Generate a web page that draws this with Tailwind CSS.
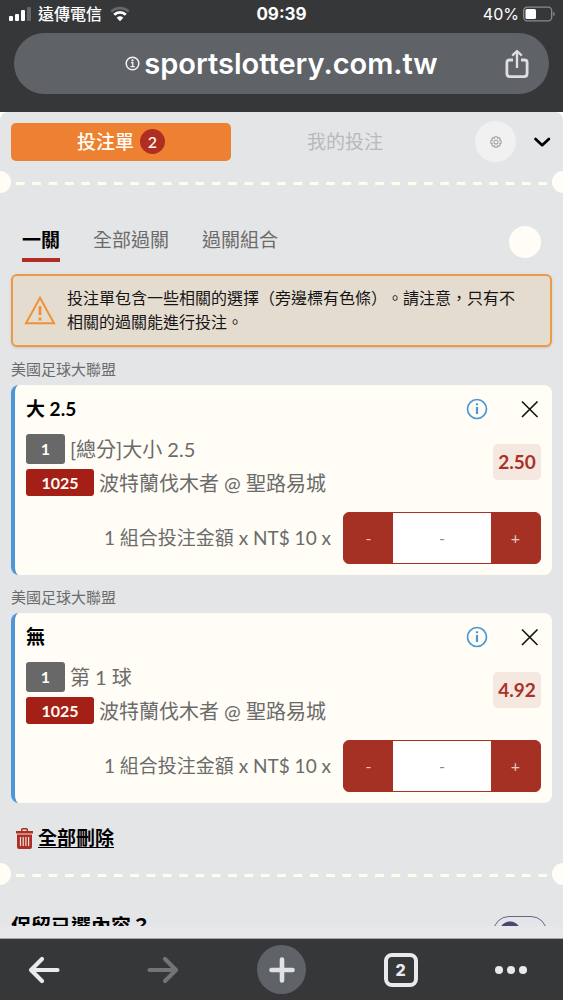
<!DOCTYPE html>
<html lang="zh-Hant">
<head>
<meta charset="utf-8">
<meta name="viewport" content="width=device-width, initial-scale=1">
<title>投注單</title>
<script src="https://cdn.jsdelivr.net/npm/@tailwindcss/browser@4"></script>
</head>
<body class="flex h-screen flex-col overflow-hidden bg-white font-['Lato','Noto_Sans_CJK_TC',sans-serif] text-[#6b6b6b]">

<header class="shrink-0 bg-[#363739] pb-[18px] font-['Inter','Noto_Sans_CJK_TC',sans-serif] text-white">
  <div class="grid h-[33px] grid-cols-3 items-start px-2 pt-1 leading-5">
    <div class="flex items-center gap-1.5">
      <svg class="h-3.5 w-6" viewBox="0 0 24 14" fill="#fff" aria-hidden="true">
        <rect x="1" y="9" width="4" height="5" rx="1"/><rect x="7" y="7" width="4" height="7" rx="1"/><rect x="13" y="3" width="4" height="11" rx="1"/><rect x="19" y="0" width="4" height="14" rx="1" fill="#66676a"/>
      </svg>
      <span class="whitespace-nowrap text-base leading-5 font-medium">遠傳電信</span>
      <svg class="ml-0.5 h-4 w-5" viewBox="0 0 20 16" fill="none" aria-hidden="true">
        <path d="M1.2 5.6C6 .9 14 .9 18.800 5.600" stroke="#66676a" stroke-width="2.700"/>
        <path d="M4.200 8.700C7.400 5.700 12.600 5.700 15.800 8.700" stroke="#fff" stroke-width="2.700"/>
        <path d="M6.700 11.700Q10 9 13.300 11.700L10 15.300Z" fill="#fff"/>
      </svg>
    </div>
    <span class="text-center text-[17px] leading-5 font-bold">09:39</span>
    <div class="flex items-center justify-end gap-1">
      <span class="text-base leading-5">40%</span>
      <svg class="h-4 w-8" viewBox="0 0 32 16" aria-hidden="true">
        <rect x=".7" y="1.200" width="28" height="13.600" rx="3.500" fill="none" stroke="#8a8b8d" stroke-width="1.300"/>
        <rect x="2.500" y="3" width="10.500" height="10" rx="1.500" fill="#fff"/><path d="M30.300 6v4q1.600-.6 1.600-2t-1.600-2" fill="#8a8b8d"/>
      </svg>
    </div>
  </div>
  <div class="mx-3.5 flex h-[61px] items-center rounded-full bg-[#5f6267] px-5">
    <span class="w-6"></span>
    <div class="flex flex-1 items-center justify-center gap-1">
      <svg class="size-[15px]" viewBox="0 0 15 15" fill="none" stroke="#f4f4f4" aria-hidden="true"><circle cx="7.500" cy="7.500" r="6.300" stroke-width="1.500"/><path d="M6 6.700h1.800v4M5.500 10.700h4.200" stroke-width="1.300"/><circle cx="7.500" cy="4.300" r="1.100" fill="#fff" stroke="none"/></svg>
      <a href="#" class="text-[29px] leading-9 font-semibold">sportslottery.com.tw</a>
    </div>
    <button type="button" aria-label="分享" class="w-6">
      <svg class="h-[30px] w-6" viewBox="0 0 24 30" fill="none" stroke="#dcdee2" stroke-width="2.800" stroke-linejoin="round"><path d="M8 11H4.500Q1.900 11 1.900 13.500V24.500Q1.900 27.600 5 27.600H19Q22.100 27.600 22.100 24.500V13.500Q22.100 11 19.500 11H16"/><path d="M12 19V3" stroke-width="2.400"/><path d="M7.200 6.600 12 2 16.800 6.600" stroke-width="2.400"/></svg>
    </button>
  </div>
</header>

<main class="flex min-h-0 flex-1 flex-col rounded-t-lg bg-[#e4e5e7]">
  <div class="min-h-0 flex-1 overflow-hidden">
    <nav class="flex items-center px-[11px] pt-[9px]" aria-label="投注">
      <button type="button" class="flex h-[38px] flex-1 items-center justify-center gap-1.5 rounded-[5px] bg-[#ee8131] text-[19px] leading-6 font-medium text-[#fffdf6]">投注單<span class="flex size-[25px] items-center justify-center rounded-full bg-[#b02d21] text-base">2</span></button>
      <button type="button" class="flex-1 px-1 text-[19px] leading-6 text-[#b8b9bb]">我的投注</button>
      <div class="flex w-[93px] items-center justify-between pl-4">
        <button type="button" aria-label="設定" class="flex size-[41px] items-center justify-center rounded-full bg-[#f1f1f1]">
          <svg class="size-3" viewBox="0 0 24 24" fill="none" stroke="#a3a3a3" stroke-width="2.200" stroke-linejoin="round"><circle cx="12" cy="12" r="4"/><path d="M9.800 1.500h4.400l.8 2.900 2.600-1.400 3 3-1.400 2.600 3 .9v4.800l-3 .9 1.400 2.600-3 3-2.600-1.400-.8 3.100H9.800L9 19.400l-2.600 1.400-3-3 1.400-2.600-3.100-.9V9.500l3.100-.9L3.400 6l3-3L9 4.400Z"/></svg>
        </button>
        <button type="button" aria-label="收合" class="text-black"><svg class="h-3 w-5" viewBox="0 0 20 12" fill="none" stroke="#000" stroke-width="2.700" stroke-linecap="round" stroke-linejoin="round"><path d="M3.500 3 10.200 9.200 16.900 3"/></svg></button>
      </div>
    </nav>
    <div class="mt-[9px] -mx-[11px] flex items-center justify-between" aria-hidden="true">
      <span class="size-[22px] shrink-0 rounded-full bg-[#fffdf6]"></span>
      <svg class="mx-[5px] mt-[3px] h-[3px] min-w-0 flex-1"><line x1="0" x2="100%" y1="50%" y2="50%" pathLength="3253" stroke="#fffdf0" stroke-width="3" stroke-dasharray="53 47"/></svg>
      <span class="size-[22px] shrink-0 rounded-full bg-[#fffdf6]"></span>
    </div>
    <div class="mt-[31px] flex items-center justify-between pr-[22px] pl-[22px]">
      <div class="flex gap-[33px] pt-1 text-[19px] leading-6">
        <button type="button" class="border-b-4 border-[#b02d26] pb-1.5 font-bold text-black">一關</button>
        <button type="button" class="border-b-4 border-transparent pb-1.5">全部過關</button>
        <button type="button" class="border-b-4 border-transparent pb-1.5">過關組合</button>
      </div>
      <button type="button" aria-label="更多" class="mb-0.5 size-8 rounded-full bg-[#fffdf6]"></button>
    </div>

    <div class="px-[11px]">
      <div role="alert" class="mt-3 flex items-center gap-[11px] rounded-md border-2 border-[#ec9a45] bg-[#e5dcd0] pt-2.5 pr-6 pb-[11px] pl-[11px] shadow">
        <svg class="h-8 w-8 shrink-0" viewBox="0 0 32 32" fill="none" stroke="#ee9138" aria-hidden="true"><path d="M16 3.800 30 29.200H2Z" stroke-width="2"/><path d="M16 12v9M16 23.500v3" stroke-width="2.800"/></svg>
        <p class="text-base leading-6 text-[#151515] [text-spacing-trim:space-all]">投注單包含一些相關的選擇（旁邊標有色條）。請注意，只有不<br>相關的過關能進行投注。</p>
      </div>

      <h2 class="pt-3 pb-1.5 text-[15px] leading-5">美國足球大聯盟</h2>
      <section class="rounded-lg border-l-4 border-[#4c97d8] bg-[#fffdf6] pt-3 pr-[11px] pb-[11px] pl-[11px]">
        <div class="flex h-6 items-center">
          <h3 class="flex-1 text-[19px] leading-6 font-bold text-black">大 2.5</h3>
          <button type="button" aria-label="資訊" class="mr-[31px]"><svg class="size-[22px]" viewBox="0 0 22 22" fill="none" stroke="#4c97d8"><circle cx="11" cy="11" r="9.500" stroke-width="1.700"/><path d="M11 9v7" stroke-width="2.200"/><path d="M11 5.300v2" stroke-width="2.200"/></svg></button>
          <button type="button" aria-label="移除"><svg class="h-[22px] w-[22px]" viewBox="0 0 22 22" fill="none" stroke="#111" stroke-width="1.600"><path d="M3 3.500 18.500 19M18.500 3.500 3 19"/></svg></button>
        </div>
        <div class="mt-[13px] flex items-center justify-between">
          <div class="flex flex-col gap-[5px] text-xl leading-[26px]">
            <div class="flex h-[30px] items-center gap-[5px]"><span class="flex h-full w-[39px] items-center justify-center rounded-[3px] bg-[#686868] text-base font-bold text-[#fffdf6]">1</span><span>[總分]大小 2.5</span></div>
            <div class="flex h-[27px] items-center gap-[5px]"><span class="flex h-full w-[68px] items-center justify-center rounded-[3px] bg-[#a42016] text-base font-bold text-[#fffdf6]">1025</span><span>波特蘭伐木者 @ 聖路易城</span></div>
          </div>
          <output class="mb-1.5 flex h-9 w-12 items-center justify-center rounded-[5px] bg-[#f5e8e0] text-[19px] font-bold text-[#a83226]">2.50</output>
        </div>
        <div class="mt-4 flex items-center justify-end gap-3">
          <label for="stake-1" class="text-[19px] leading-6">1 組合投注金額 x NT$ 10 x</label>
          <div class="flex h-[52px] w-[198px] overflow-hidden rounded-md border border-[#a53125] bg-[#a53125] text-base text-[#e8c9c0]">
            <button type="button" class="w-[49px]">-</button>
            <input id="stake-1" type="text" placeholder="-" class="min-w-0 flex-1 bg-white text-center text-base text-[#8a8a8a] outline-none placeholder:text-[#8a8a8a]">
            <button type="button" class="w-[49px]">+</button>
          </div>
        </div>
      </section>

      <h2 class="pt-3 pb-1.5 text-[15px] leading-5">美國足球大聯盟</h2>
      <section class="rounded-lg border-l-4 border-[#4c97d8] bg-[#fffdf6] pt-3 pr-[11px] pb-[11px] pl-[11px]">
        <div class="flex h-6 items-center">
          <h3 class="flex-1 text-[19px] leading-6 font-bold text-black">無</h3>
          <button type="button" aria-label="資訊" class="mr-[31px]"><svg class="size-[22px]" viewBox="0 0 22 22" fill="none" stroke="#4c97d8"><circle cx="11" cy="11" r="9.500" stroke-width="1.700"/><path d="M11 9v7" stroke-width="2.200"/><path d="M11 5.300v2" stroke-width="2.200"/></svg></button>
          <button type="button" aria-label="移除"><svg class="h-[22px] w-[22px]" viewBox="0 0 22 22" fill="none" stroke="#111" stroke-width="1.600"><path d="M3 3.500 18.500 19M18.500 3.500 3 19"/></svg></button>
        </div>
        <div class="mt-[13px] flex items-center justify-between">
          <div class="flex flex-col gap-[5px] text-xl leading-[26px]">
            <div class="flex h-[30px] items-center gap-[5px]"><span class="flex h-full w-[39px] items-center justify-center rounded-[3px] bg-[#686868] text-base font-bold text-[#fffdf6]">1</span><span>第 1 球</span></div>
            <div class="flex h-[27px] items-center gap-[5px]"><span class="flex h-full w-[68px] items-center justify-center rounded-[3px] bg-[#a42016] text-base font-bold text-[#fffdf6]">1025</span><span>波特蘭伐木者 @ 聖路易城</span></div>
          </div>
          <output class="mb-1.5 flex h-9 w-12 items-center justify-center rounded-[5px] bg-[#f5e8e0] text-[19px] font-bold text-[#a83226]">4.92</output>
        </div>
        <div class="mt-4 flex items-center justify-end gap-3">
          <label for="stake-2" class="text-[19px] leading-6">1 組合投注金額 x NT$ 10 x</label>
          <div class="flex h-[52px] w-[198px] overflow-hidden rounded-md border border-[#a53125] bg-[#a53125] text-base text-[#e8c9c0]">
            <button type="button" class="w-[49px]">-</button>
            <input id="stake-2" type="text" placeholder="-" class="min-w-0 flex-1 bg-white text-center text-base text-[#8a8a8a] outline-none placeholder:text-[#8a8a8a]">
            <button type="button" class="w-[49px]">+</button>
          </div>
        </div>
      </section>

      <button type="button" class="mt-[23px] ml-[5px] flex items-center gap-[5px] text-[19px] leading-6 font-bold text-black">
        <svg class="h-[21px] w-[17px]" viewBox="0 0 17 21" aria-hidden="true"><path d="M0 3h5V1.500Q5 0 6.500 0h4Q12 0 12 1.500V3h5v2.500H0ZM6.500 3h4V1.500h-4ZM1 6.500h15v12.500q0 2-2 2H3q-2 0-2-2Z" fill="#b02d21" fill-rule="evenodd"/><path d="M4.500 9v9M7.200 9v9M9.900 9v9M12.600 9v9" stroke="#e4e5e7" stroke-width="1.200"/></svg>
        <span class="underline underline-offset-2">全部刪除</span>
      </button>
    </div>

    <div class="mt-[13px] -mx-[11px] flex items-center justify-between" aria-hidden="true">
      <span class="size-[22px] shrink-0 rounded-full bg-[#fffdf6]"></span>
      <svg class="mx-[5px] mt-[3px] h-[3px] min-w-0 flex-1"><line x1="0" x2="100%" y1="50%" y2="50%" pathLength="3253" stroke="#fffdf0" stroke-width="3" stroke-dasharray="53 47"/></svg>
      <span class="size-[22px] shrink-0 rounded-full bg-[#fffdf6]"></span>
    </div>
    <label class="mt-[31px] flex items-start justify-between pr-4 pl-[11px] text-xl leading-5 font-bold text-black">
      <span>保留已選內容？</span>
      <input type="checkbox" role="switch" class="h-8 w-[54px] appearance-none rounded-full border border-[#68658a] bg-[radial-gradient(circle_at_16px_15px,#4a4672_10px,transparent_11px)]">
    </label>
  </div>
  <div class="h-[13px] shrink-0 border-b border-[#a5a6a8] bg-[#e7e7e9]"></div>
</main>

<footer class="flex h-[61px] shrink-0 items-center justify-between bg-[#363739] px-[19px]">
  <button type="button" aria-label="返回" class="flex w-[49px] justify-center"><svg class="h-[30px] w-8" viewBox="0 0 32 30" fill="none" stroke="#e8eaed" stroke-width="4.200" stroke-linecap="round" stroke-linejoin="round"><path d="M29.500 15H3M14 4 3 15 14 26"/></svg></button>
  <button type="button" aria-label="前進" class="flex w-[49px] justify-center"><svg class="h-[30px] w-8" viewBox="0 0 32 30" fill="none" stroke="#737476" stroke-width="4.200" stroke-linecap="round" stroke-linejoin="round"><path d="M2.500 15H29M18 4l11 11-11 11"/></svg></button>
  <button type="button" aria-label="新分頁" class="flex size-[49px] items-center justify-center rounded-full bg-[#5f6367]"><svg class="size-[30px]" viewBox="0 0 30 30" stroke="#dfe1e5" stroke-width="4.600" stroke-linecap="round"><path d="M15 4.500v21M4.500 15h21"/></svg></button>
  <button type="button" class="flex w-[49px] justify-center font-['Inter',sans-serif] text-base leading-5 font-extrabold text-[#e8eaed]"><span class="flex size-[34px] items-center justify-center rounded-lg border-4 border-[#e8eaed]">2</span></button>
  <button type="button" aria-label="選單" class="flex w-[49px] justify-end pr-[17px]"><svg class="h-2 w-8 shrink-0" viewBox="0 0 32 8" fill="#e8eaed"><circle cx="4" cy="4" r="4"/><circle cx="16" cy="4" r="4"/><circle cx="28" cy="4" r="4"/></svg></button>
</footer>
</body>
</html>
